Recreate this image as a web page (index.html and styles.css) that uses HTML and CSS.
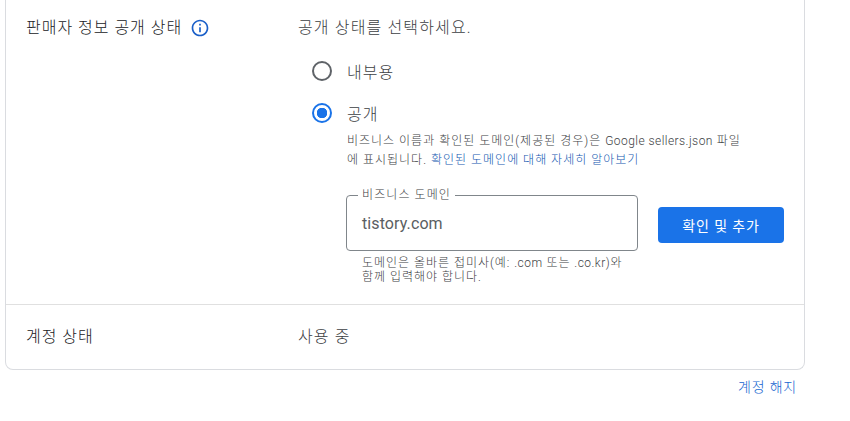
FILE: index.html
```html
<!DOCTYPE html>
<html lang="ko">
<head>
<meta charset="utf-8">
<title>판매자 정보</title>
<link rel="stylesheet" href="styles.css">
</head>
<body>
<main class="page">
  <section class="card">
    <div class="row row-top">
      <div class="label">
        <span>판매자 정보 공개 상태</span>
        <svg class="info" viewBox="0 0 24 24" width="20" height="20" aria-hidden="true"><path fill="#1a5fc8" d="M11 7h2v2h-2zm0 4h2v6h-2zm1-9C6.48 2 2 6.48 2 12s4.48 10 10 10 10-4.48 10-10S17.52 2 12 2zm0 18c-4.41 0-8-3.59-8-8s3.59-8 8-8 8 3.59 8 8-3.59 8-8 8z"/></svg>
      </div>
      <div class="value">
        <p class="prompt">공개 상태를 선택하세요.</p>
        <div class="option option-first">
          <span class="radio"></span>
          <span class="option-text">내부용</span>
        </div>
        <div class="option option-second">
          <span class="radio radio-on"></span>
          <span class="option-text">공개</span>
        </div>
        <p class="desc">비즈니스 이름과 확인된 도메인(제공된 경우)은 <span class="latin">Google sellers.json</span> 파일<br>에 표시됩니다. <a class="link" href="#">확인된 도메인에 대해 자세히 알아보기</a></p>
        <div class="domain">
          <div class="field-wrap">
            <div class="field">
              <span class="field-label">비즈니스 도메인</span>
              <span class="field-text">tistory.com</span>
            </div>
            <p class="hint">도메인은 올바른 접미사(예: <span class="latin">.com</span> 또는 <span class="latin">.co.kr</span>)와<br>함께 입력해야 합니다.</p>
          </div>
          <button class="btn" type="button">확인 및 추가</button>
        </div>
      </div>
    </div>
    <div class="row row-bottom">
      <div class="label"><span>계정 상태</span></div>
      <div class="value"><p class="prompt">사용 중</p></div>
    </div>
  </section>
  <div class="footer"><a class="close" href="#">계정 해지</a></div>
</main>
</body>
</html>
```

FILE: styles.css
```css
* { box-sizing: border-box; }
html, body { margin: 0; padding: 0; background: #fff; }
body {
  height: 421px;
  overflow: hidden;
  font-family: Roboto, "Noto Sans CJK KR", sans-serif;
  font-weight: 300;
  color: #3c4043;
}
p { margin: 0; }
a { text-decoration: none; }
.page { width: 805px; padding-left: 5px; }
.card {
  border: 1px solid #dadce0;
  border-top: 0;
  border-radius: 0 0 8px 8px;
}
.row { display: flex; padding-left: 20px; }
.row-top { height: 305px; padding-top: 18px; border-bottom: 1px solid #e0e0e0; }
.row-bottom { height: 64px; padding-top: 22px; }
.label {
  width: 272px;
  flex: none;
  display: flex;
  align-items: flex-start;
  gap: 8px;
  font-size: 16px;
  line-height: 20px;
  letter-spacing: 1px;
  color: #202124;
}
.info { flex: none; }
.value { flex: 1; min-width: 0; }
.prompt { font-size: 16px; line-height: 20px; letter-spacing: 1.15px; color: #3c4043; }
.option { display: flex; align-items: center; height: 20px; padding-left: 14px; gap: 15px; }
.option-first { margin-top: 23px; }
.option-second { margin-top: 22px; }
.option-text { font-size: 16px; letter-spacing: 1px; color: #3c4043; }
.radio {
  width: 20px;
  height: 20px;
  flex: none;
  border: 2px solid #5f6368;
  border-radius: 50%;
}
.radio-on {
  border-color: #1a73e8;
  background: radial-gradient(circle, #1a73e8 0 5px, transparent 5.5px);
}
.desc {
  margin-top: 9px;
  padding-left: 49px;
  font-size: 12px;
  line-height: 19px;
  letter-spacing: 1px;
  color: #3c4043;
}
.latin { letter-spacing: .45px; }
.link { color: #1257b0; }
.domain { display: flex; align-items: flex-start; margin-top: 25px; padding-left: 48px; gap: 20px; }
.field-wrap { width: 292px; flex: none; }
.field {
  position: relative;
  height: 56px;
  padding: 0 15px;
  display: flex;
  align-items: center;
  border: 1px solid #80868b;
  border-radius: 4px;
}
.field-label {
  position: absolute;
  top: -8px;
  left: 11px;
  padding: 0 4px;
  background: #fff;
  font-size: 12px;
  line-height: 14px;
  letter-spacing: 1.1px;
  color: #3c4043;
}
.field-text { font-size: 16px; font-weight: 400; letter-spacing: .1px; color: #5a5e62; }
.hint {
  margin-top: 5px;
  padding-left: 16px;
  font-size: 12px;
  line-height: 14px;
  letter-spacing: .98px;
  color: #3c4043;
}
.btn {
  margin-top: 12px;
  width: 126px;
  height: 36px;
  border: 0;
  border-radius: 4px;
  background: #1a73e8;
  color: #fff;
  font: 400 14px Roboto, "Noto Sans CJK KR", sans-serif;
  letter-spacing: .85px;
}
.footer { display: flex; justify-content: flex-end; padding: 7px 8px 0 0; }
.close { font-size: 14px; line-height: 20px; letter-spacing: .8px; color: #1565d0; }
```
